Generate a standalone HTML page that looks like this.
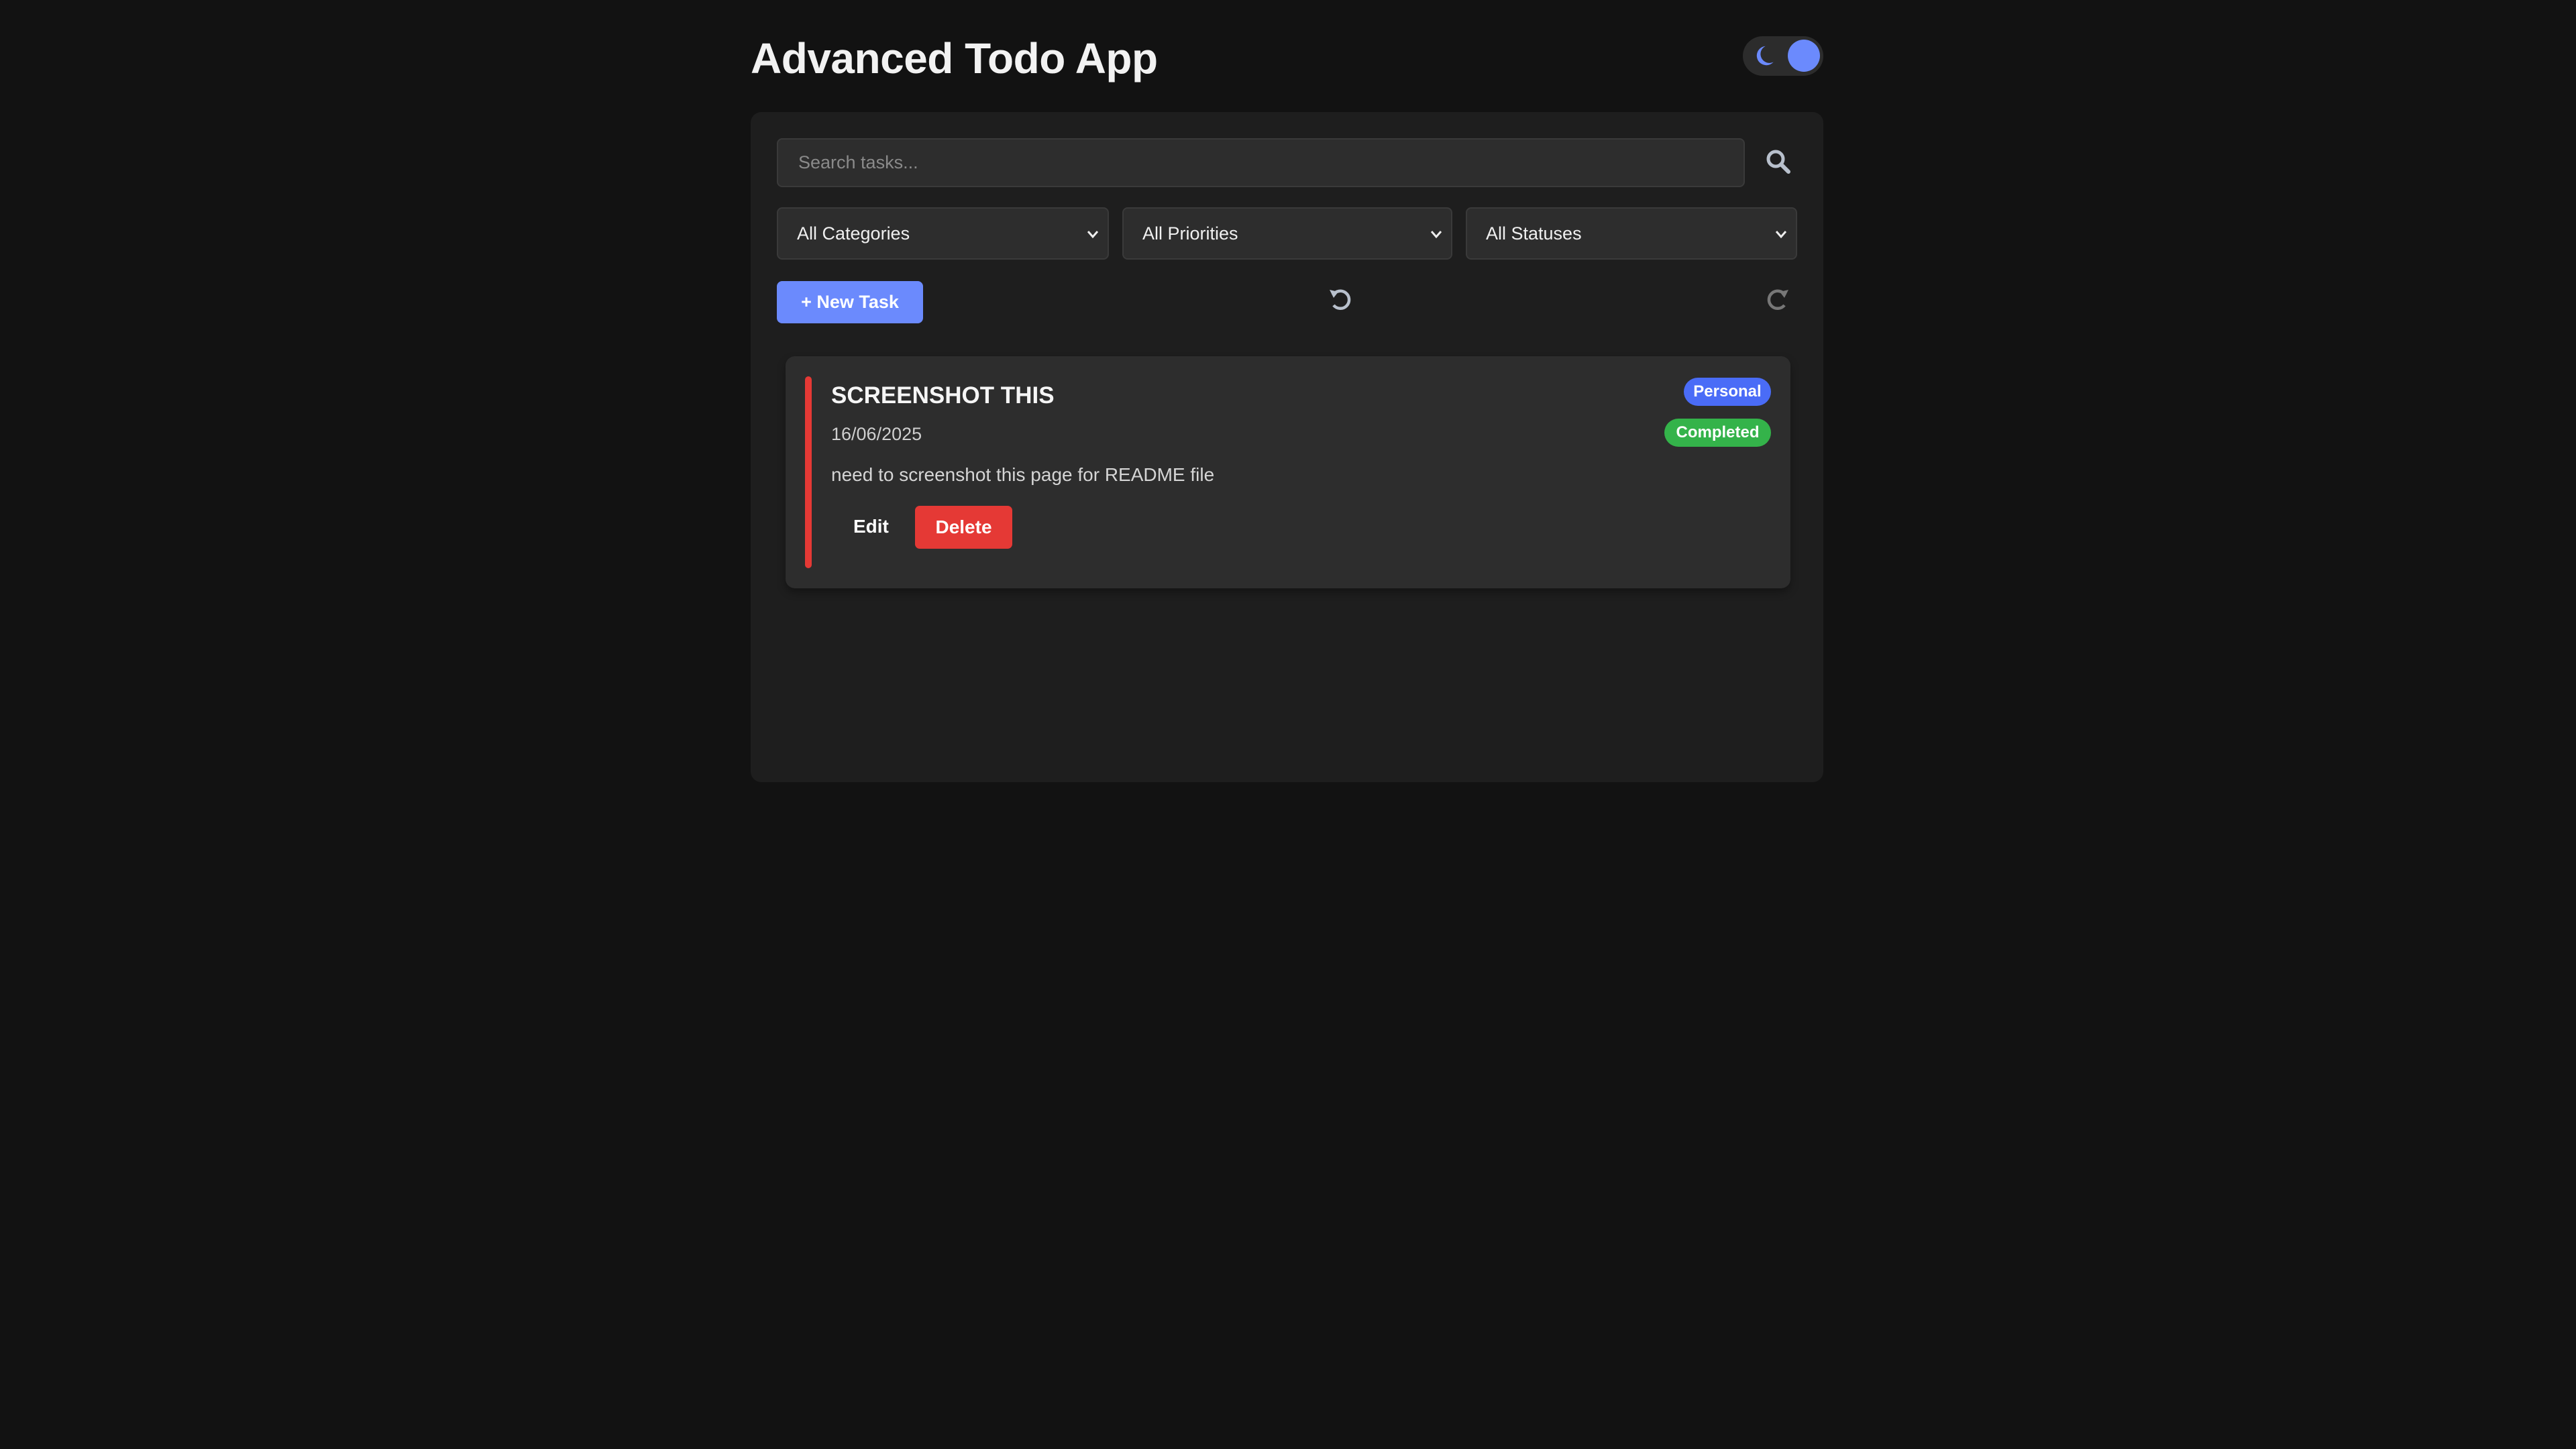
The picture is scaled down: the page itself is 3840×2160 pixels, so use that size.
<!DOCTYPE html>
<html><head><meta charset="utf-8"><style>
*{box-sizing:border-box;margin:0;padding:0}
body{width:3840px;height:2160px;background:#121212;font-family:"Liberation Sans",sans-serif;position:relative;overflow:hidden;color:#eee}
.abs{position:absolute}
h1{position:absolute;left:1119px;top:50px;font-size:64px;font-weight:bold;color:#f2f2f2;letter-spacing:-0.5px}
.toggle{left:2598px;top:54px;width:120px;height:59px;border-radius:30px;background:#2c2c2c}
.knob{left:2665px;top:59px;width:48px;height:48px;border-radius:50%;background:#6b8afd}
.container{left:1119px;top:167px;width:1599px;height:999px;background:#1e1e1e;border-radius:16px}
.input{left:1158px;top:206px;width:1443px;height:73px;background:#2d2d2d;border:2px solid #3a3a3a;border-radius:8px;color:#8a8a8a;font-size:27px;line-height:69px;padding-left:30px}
.sel{top:309px;height:78px;background:#2d2d2d;border:2px solid #3a3a3a;border-radius:8px;color:#f0f0f0;font-size:27px;line-height:74px;padding-left:28px}
.sel svg{position:absolute;right:12px;top:28px}
.btn{left:1158px;top:419px;width:218px;height:63px;background:#6b8afd;border-radius:8px;color:#fff;font-weight:bold;font-size:27px;line-height:63px;text-align:center}
.card{left:1171px;top:531px;width:1498px;height:346px;background:#2d2d2d;border-radius:14px;box-shadow:0 6px 12px rgba(0,0,0,.35)}
.bar{left:1200px;top:561px;width:10px;height:286px;background:#e53935;border-radius:5px}
.t{left:1239px;top:570px;font-size:35px;font-weight:bold;color:#f5f5f5}
.d{left:1239px;top:632px;font-size:27px;color:#cfcfcf}
.ds{left:1239px;top:692px;font-size:28px;color:#d5d5d5}
.badge{height:42px;border-radius:21px;color:#fff;font-weight:bold;font-size:24px;line-height:42px;text-align:center}
.edit{left:1272px;top:769px;font-size:28px;font-weight:bold;color:#fff}
.del{left:1364px;top:754px;width:145px;height:64px;background:#e53935;border-radius:7px;color:#fff;font-weight:bold;font-size:28px;line-height:64px;text-align:center}
</style></head><body>
<h1>Advanced Todo App</h1>
<div class="abs toggle"></div>
<svg class="abs" style="left:2608px;top:64px" width="38" height="38" viewBox="0 0 32 32"><path d="M20 4 A12 12 0 1 0 30 24 A10 10 0 0 1 20 4Z" fill="#6b8afd"/></svg>
<div class="abs knob"></div>
<div class="abs container"></div>
<div class="abs input">Search tasks...</div>
<svg class="abs" style="left:2630px;top:220px" width="42" height="42" viewBox="0 0 42 42"><circle cx="17" cy="17" r="11" fill="none" stroke="#b8c0cc" stroke-width="5"/><line x1="25" y1="25" x2="36" y2="36" stroke="#b8c0cc" stroke-width="6" stroke-linecap="round"/></svg>
<div class="abs sel" style="left:1158px;width:495px">All Categories<svg width="20" height="20" viewBox="0 0 20 20"><path d="M3 6 L10 14 L17 6" fill="none" stroke="#eee" stroke-width="3"/></svg></div>
<div class="abs sel" style="left:1673px;width:492px">All Priorities<svg width="20" height="20" viewBox="0 0 20 20"><path d="M3 6 L10 14 L17 6" fill="none" stroke="#eee" stroke-width="3"/></svg></div>
<div class="abs sel" style="left:2185px;width:494px">All Statuses<svg width="20" height="20" viewBox="0 0 20 20"><path d="M3 6 L10 14 L17 6" fill="none" stroke="#eee" stroke-width="3"/></svg></div>
<div class="abs btn">+ New Task</div>
<svg class="abs" style="left:1978px;top:426px" width="40" height="40" viewBox="0 0 40 40"><path d="M9 14 A13 13 0 1 1 10 29" fill="none" stroke="#b8c0cc" stroke-width="4.5"/><path d="M4 6 L10 18 L17 9Z" fill="#b8c0cc"/></svg>
<svg class="abs" style="left:2630px;top:426px" width="40" height="40" viewBox="0 0 40 40"><path d="M31 14 A13 13 0 1 0 30 29" fill="none" stroke="#777" stroke-width="4.5"/><path d="M36 6 L30 18 L23 9Z" fill="#777"/></svg>
<div class="abs card"></div>
<div class="abs bar"></div>
<div class="abs t">SCREENSHOT THIS</div>
<div class="abs d">16/06/2025</div>
<div class="abs ds">need to screenshot this page for README file</div>
<div class="abs badge" style="left:2510px;top:563px;width:130px;background:#4a6cf7">Personal</div>
<div class="abs badge" style="left:2481px;top:624px;width:159px;background:#34b34a">Completed</div>
<div class="abs edit">Edit</div>
<div class="abs del">Delete</div>
</body></html>
